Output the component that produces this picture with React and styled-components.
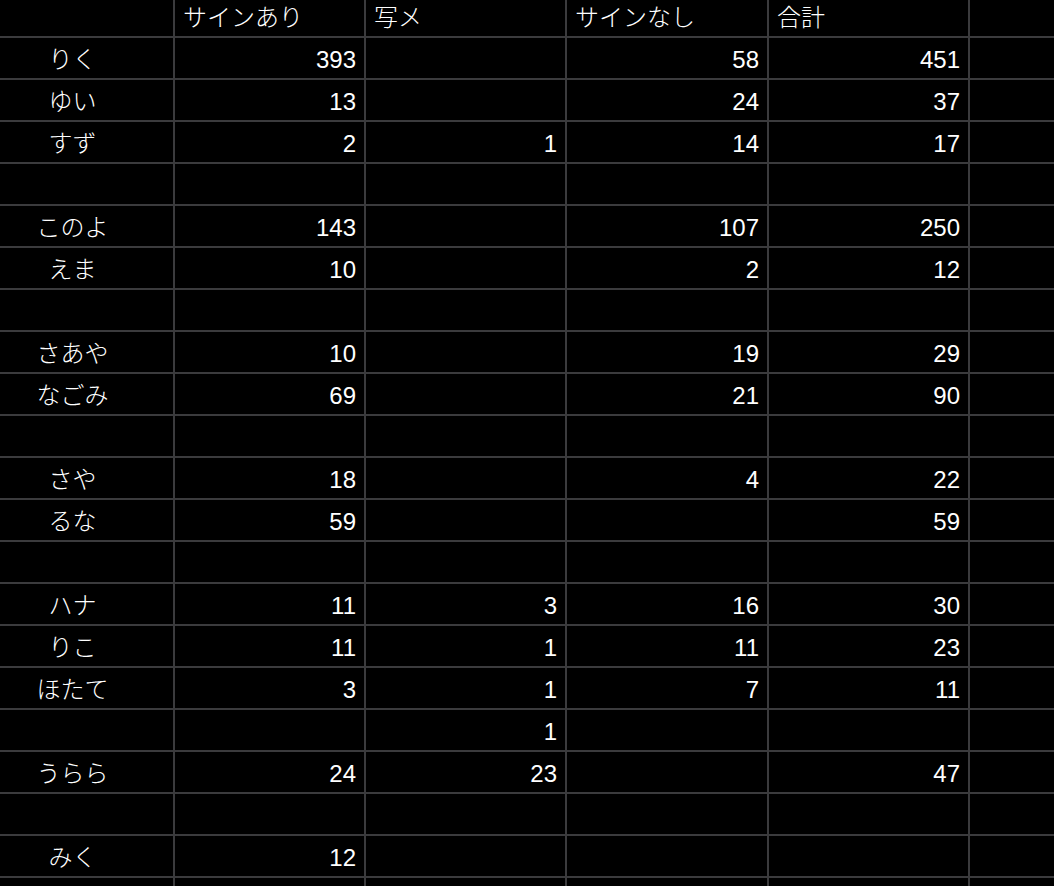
import React from "react";
import styled, { createGlobalStyle } from "styled-components";

const Global = createGlobalStyle`
  html, body { margin: 0; padding: 0; background: #000; overflow: hidden; }
  body { font-family: "Liberation Sans", "Noto Sans CJK JP", sans-serif; }
`;

const Viewport = styled.div`
  width: 1054px;
  height: 886px;
  overflow: hidden;
`;

const Sheet = styled.div`
  display: grid;
  grid-template-columns: 201px 189px 199px 200px 199px 200px;
  grid-auto-rows: 40px;
  grid-template-rows: 36px;
  gap: 2px;
  background: #3b3b3d;
  margin-left: -28px;
  width: max-content;
  height: 886px;
  align-content: start;
`;

const Cell = styled.div`
  background: #000;
  color: #fff;
  font-size: 24px;
  font-weight: 300;
  line-height: 1;
  display: flex;
  align-items: center;
  padding: 4px 8px 0;
  white-space: nowrap;
  justify-content: ${(p) =>
    p.$align === "center" ? "center" : p.$align === "right" ? "flex-end" : "flex-start"};
`;

const HeaderCell = styled(Cell)`
  align-items: flex-start;
  padding-top: 6px;
`;

const headers = ["", "サインあり", "写メ", "サインなし", "合計", ""];

const rows = [
  ["りく", "393", "", "58", "451"],
  ["ゆい", "13", "", "24", "37"],
  ["すず", "2", "1", "14", "17"],
  [],
  ["このよ", "143", "", "107", "250"],
  ["えま", "10", "", "2", "12"],
  [],
  ["さあや", "10", "", "19", "29"],
  ["なごみ", "69", "", "21", "90"],
  [],
  ["さや", "18", "", "4", "22"],
  ["るな", "59", "", "", "59"],
  [],
  ["ハナ", "11", "3", "16", "30"],
  ["りこ", "11", "1", "11", "23"],
  ["ほたて", "3", "1", "7", "11"],
  ["", "", "1", "", ""],
  ["うらら", "24", "23", "", "47"],
  [],
  ["みく", "12", "", "", ""],
  [],
];

export default function App() {
  return (
    <>
      <Global />
      <Viewport>
        <Sheet>
          {headers.map((h, i) => (
            <HeaderCell key={"h" + i}>{h}</HeaderCell>
          ))}
          {rows.map((r, ri) =>
            Array.from({ length: 6 }).map((_, ci) => (
              <Cell key={ri + "-" + ci} $align={ci === 0 ? "center" : "right"}>
                {r[ci] || ""}
              </Cell>
            ))
          )}
        </Sheet>
      </Viewport>
    </>
  );
}
